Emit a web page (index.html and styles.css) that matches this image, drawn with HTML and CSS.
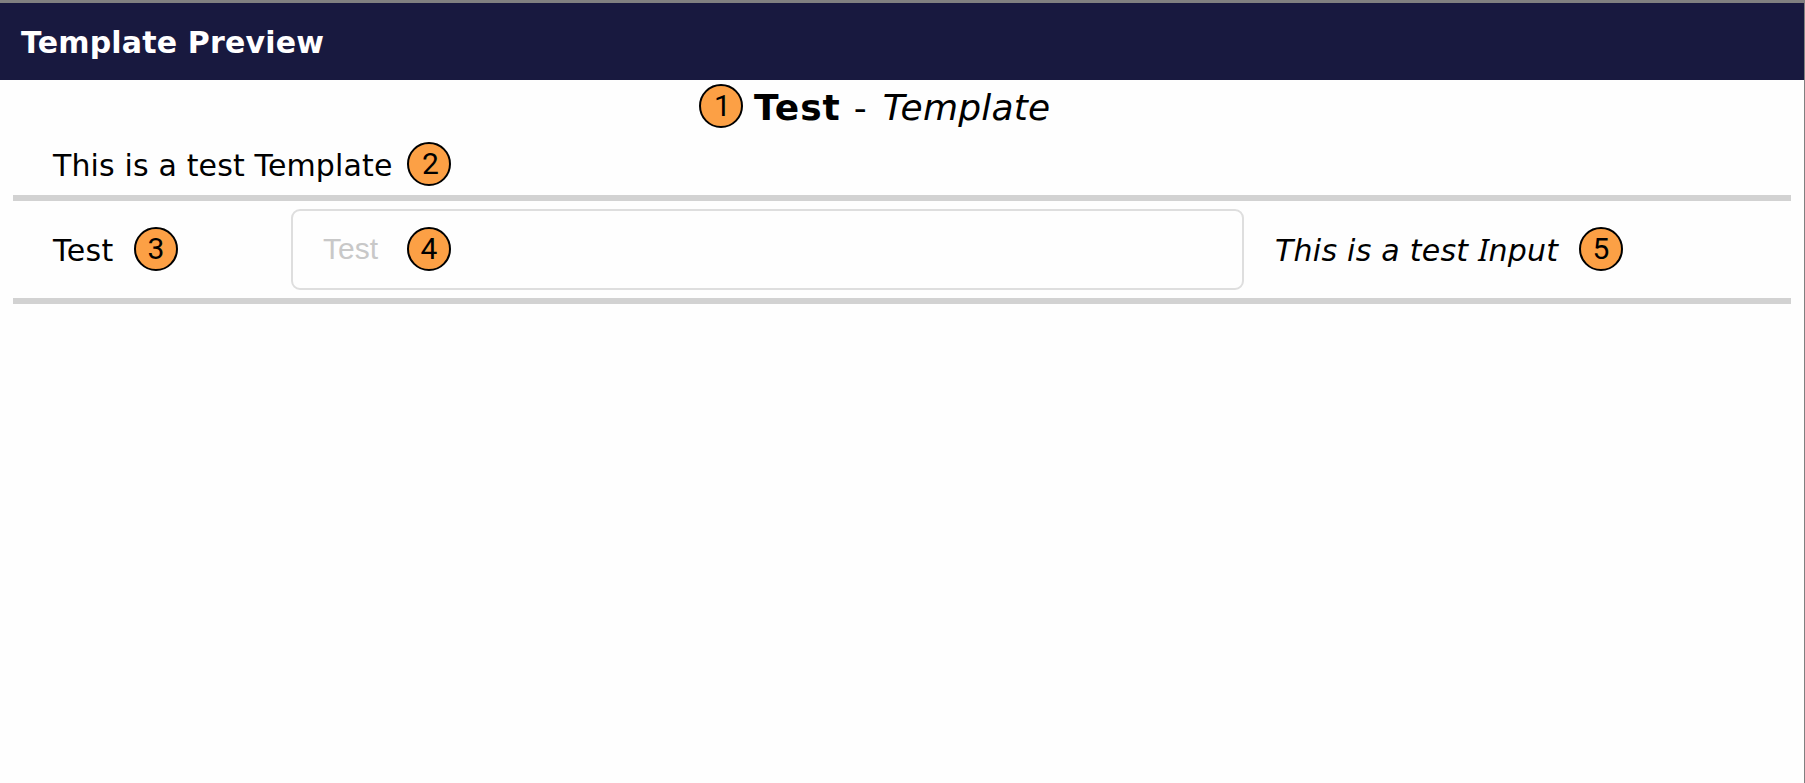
FILE: index.html
```html
<!DOCTYPE html>
<html lang="en">
<head>
<meta charset="utf-8">
<title>Template Preview</title>
<link rel="stylesheet" href="styles.css">
</head>
<body>
<div class="dialog">
  <header class="titlebar"><h1 class="title">Template Preview</h1></header>
  <main class="content">
    <div class="heading">
      <span class="marker two">1</span>
      <p class="heading-text"><b class="name">Test</b><span class="dash">-</span><i class="kind">Template</i></p>
    </div>
    <div class="description"><p class="text desc-text">This is a test Template</p><span class="marker two">2</span></div>
    <div class="row">
      <div class="label-cell"><span class="text label-text">Test</span><span class="marker">3</span></div>
      <div class="field"><span class="placeholder">Test</span><span class="marker">4</span></div>
      <div class="hint-cell"><i class="text hint-text">This is a test <span class="serif-i">I</span>nput</i><span class="marker">5</span></div>
    </div>
  </main>
</div>
</body>
</html>
```
FILE: styles.css
```css
* { box-sizing: border-box; }
body { margin: 0; background: #fefefe; font-family: Verdana, "DejaVu Sans", sans-serif; color: #000; }
h1, p { margin: 0; }
.dialog { height: 783px; border-top: 3px solid #808080; border-right: 1px solid #808080; overflow: hidden; }
.titlebar { height: 77px; display: flex; align-items: center; padding: 2px 21px 0; background: #18193f; color: #fff; }
.title { font-size: 30px; font-weight: 700; line-height: 36px; letter-spacing: 0.18px; white-space: nowrap; }
.content { padding: 4px 13px 0; }
.heading { display: flex; height: 54px; padding-left: 686px; gap: 11px; }
.heading-text { display: flex; font-size: 36px; line-height: 44px; padding-top: 2px; white-space: nowrap; }
.name { letter-spacing: 1px; }
.kind { letter-spacing: 0.2px; }
.dash { margin: 0 16px 0 13px; }
.marker { flex: none; width: 44px; height: 44px; border: 2px solid #000; border-radius: 50%; background: #fca045; font: 400 30px/40px Roboto, sans-serif; text-align: center; }
.description { display: flex; height: 63px; padding: 4px 0 0 40px; border-bottom: 6px solid #d2d2d2; }
.two { padding-left: 3px; }
.text { font-size: 30px; line-height: 44px; letter-spacing: 0.14px; white-space: nowrap; flex: none; }
.desc-text { width: 354px; padding-top: 2px; }
.row { display: flex; align-items: center; height: 103px; padding: 0 0 0 40px; border-bottom: 6px solid #d2d2d2; }
.label-cell { display: flex; width: 238px; height: 45px; }
.label-text { width: 81px; padding-top: 2px; letter-spacing: 0.4px; }
.field { display: flex; align-items: center; width: 953px; height: 81px; margin-bottom: 1px; border: 2px solid #dedede; border-radius: 9px; padding-left: 30px; }
.placeholder { width: 84px; font: 30px/44px "Liberation Sans", Arial, sans-serif; color: #c8c8c8; }
.hint-cell { display: flex; height: 45px; padding-left: 31px; }
.hint-text { width: 304px; padding-top: 2px; letter-spacing: 0.25px; }
.serif-i { font-family: "Noto Sans", sans-serif; font-size: 31px; line-height: 1; }
```
